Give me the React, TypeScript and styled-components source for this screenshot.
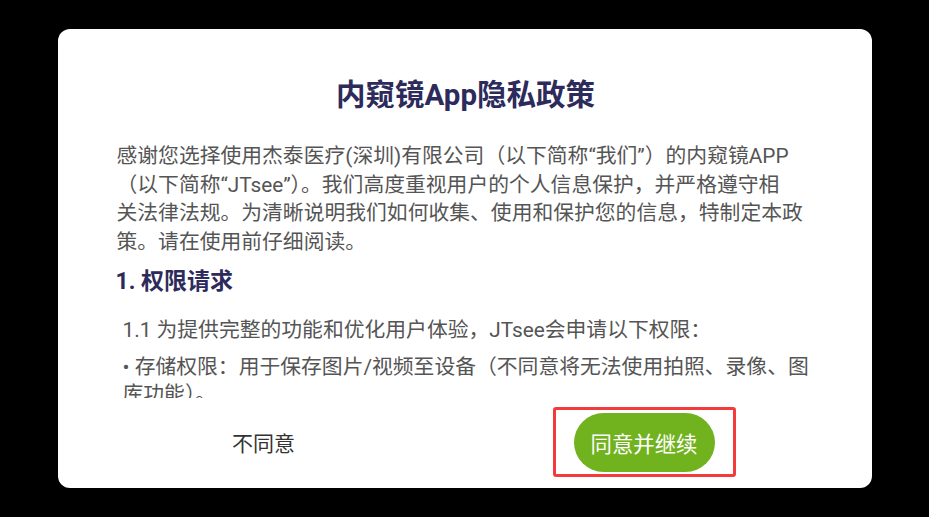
import React from "react";
import styled, { createGlobalStyle } from "styled-components";

const Global = createGlobalStyle`
  html, body { margin: 0; padding: 0; background: #000; }
  body { font-family: Roboto, "Noto Sans CJK SC", sans-serif; }
  * { box-sizing: border-box; }
`;

const Screen = styled.div`
  width: 929px;
  height: 517px;
  background: #000;
  display: flex;
  justify-content: center;
  padding-top: 29px;
`;

const Card = styled.div`
  width: 814px;
  height: 459px;
  background: #fff;
  border-radius: 12px;
  display: flex;
  flex-direction: column;
  overflow: hidden;
`;

const Scroll = styled.div`
  height: 369px;
  overflow-y: auto;
  scrollbar-width: none;
  padding: 48px 56px 0 58px;
  &::-webkit-scrollbar { display: none; }
`;

const Title = styled.h1`
  margin: 0;
  text-align: center;
  font-size: 29.5px;
  line-height: 36px;
  font-weight: 700;
  color: #2d2b5b;
`;

const Paragraph = styled.p`
  margin: 29px 0 0 1px;
  font-size: 20.8px;
  line-height: 28.5px;
  color: #555;
`;

const SectionHeading = styled.h2`
  margin: 11px 0 0 0;
  font-size: 23px;
  line-height: 30px;
  font-weight: 700;
  color: #2d2b5b;
`;

const Item = styled.p<{ $gap: number }>`
  margin: ${(p) => p.$gap}px 0 0 7px;
  font-size: 20.8px;
  line-height: 27px;
  color: #555;
`;

const Footer = styled.div`
  flex: 1;
  display: flex;
  align-items: center;
  justify-content: space-between;
  padding: 0 136px 2px 136px;
`;

const Decline = styled.button`
  width: 140px;
  background: none;
  border: none;
  padding: 0;
  font-family: inherit;
  font-size: 21px;
  color: #333;
  cursor: pointer;
`;

const Highlight = styled.div`
  width: 183px;
  height: 70px;
  border: 3px solid #f33b3b;
  border-radius: 3px;
  display: flex;
  align-items: center;
  justify-content: center;
`;

const Accept = styled.button`
  width: 141px;
  height: 59px;
  border: none;
  border-radius: 30px;
  background: #71b21f;
  color: #fff;
  font-family: inherit;
  font-size: 21.4px;
  cursor: pointer;
`;

export default function App() {
  return (
    <>
      <Global />
      <Screen>
        <Card>
          <Scroll>
            <Title>内窥镜App隐私政策</Title>
            <Paragraph>
              感谢您选择使用杰泰医疗(深圳)有限公司（以下简称“我们”）的内窥镜APP
              <br />
              （以下简称“JTsee”）。我们高度重视用户的个人信息保护，并严格遵守相
              <br />
              关法律法规。为清晰说明我们如何收集、使用和保护您的信息，特制定本政
              <br />
              策。请在使用前仔细阅读。
            </Paragraph>
            <SectionHeading>1. 权限请求</SectionHeading>
            <Item $gap={20}>1.1 为提供完整的功能和优化用户体验，JTsee会申请以下权限：</Item>
            <Item $gap={10}>• 存储权限：用于保存图片/视频至设备（不同意将无法使用拍照、录像、图库功能）。</Item>
            <Item $gap={10}>• 相机权限：用于拍照和录像（不同意将无法使用拍照、录像功能）。</Item>
          </Scroll>
          <Footer>
            <Decline>不同意</Decline>
            <Highlight>
              <Accept>同意并继续</Accept>
            </Highlight>
          </Footer>
        </Card>
      </Screen>
    </>
  );
}
